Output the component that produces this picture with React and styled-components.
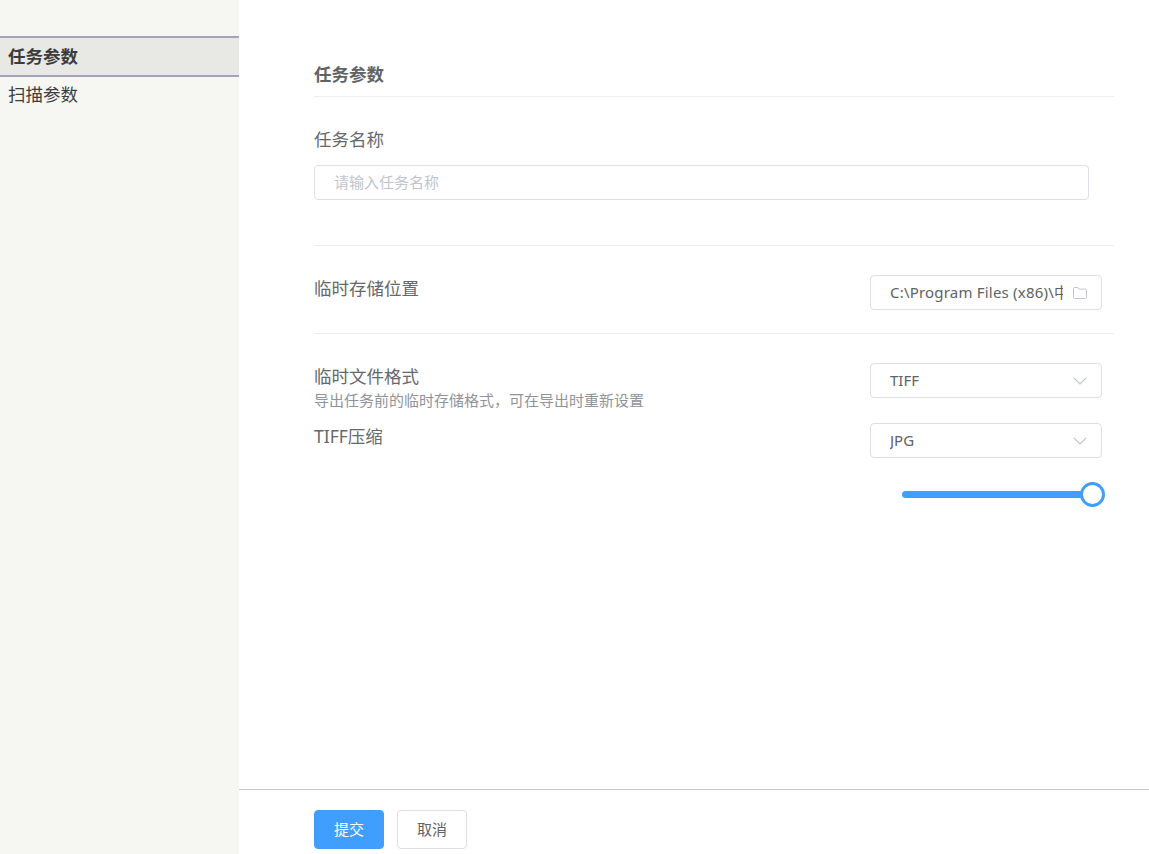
import React from "react";
import styled, { createGlobalStyle } from "styled-components";

const GlobalStyle = createGlobalStyle`
  html, body {
    margin: 0;
    padding: 0;
    background: #fff;
  }
  body {
    font-family: "Noto Sans", "Noto Sans CJK SC", sans-serif;
  }
  * {
    box-sizing: border-box;
  }
`;

const Page = styled.div`
  display: flex;
  width: 1149px;
  height: 854px;
  overflow: hidden;
`;

const Sidebar = styled.nav`
  width: 239px;
  flex-shrink: 0;
  background: #f6f7f3;
  padding-top: 36px;
`;

const NavItem = styled.div`
  height: ${(p) => (p.$active ? "41px" : "37px")};
  line-height: ${(p) => (p.$active ? "37px" : "35px")};
  padding-left: 8px;
  font-size: 17.5px;
  color: #3c3c3c;
  font-weight: ${(p) => (p.$active ? 700 : 400)};
  background: ${(p) => (p.$active ? "#e8e8e4" : "transparent")};
  border-top: ${(p) => (p.$active ? "2px solid #a5a3b9" : "none")};
  border-bottom: ${(p) => (p.$active ? "2px solid #a5a3b9" : "none")};
`;

const Main = styled.main`
  flex: 1;
  display: flex;
  flex-direction: column;
  min-width: 0;
`;

const Content = styled.div`
  flex: 1;
  padding: 54px 35px 0 75px;
`;

const Heading = styled.h2`
  margin: 0;
  height: 43px;
  line-height: 40px;
  font-size: 17.5px;
  font-weight: 700;
  color: #606266;
  border-bottom: 1px solid #ebeef5;
`;

const Section = styled.section`
  padding: ${(p) => p.$padding};
  border-bottom: ${(p) => (p.$last ? "none" : "1px solid #ebeef5")};
`;

const Label = styled.div`
  font-size: 17.5px;
  line-height: 24px;
  color: #66686c;
`;

const NameInput = styled.input`
  display: block;
  width: 775px;
  height: 35px;
  margin-top: 14px;
  padding: 0 19px 2px;
  border: 1px solid #dcdfe6;
  border-radius: 4px;
  outline: none;
  font-family: inherit;
  font-size: 15px;
  color: #606266;

  &::placeholder {
    color: #c0c4cc;
  }
`;

const Row = styled.div`
  display: flex;
  justify-content: space-between;
  align-items: flex-start;
  padding-right: 12px;
  margin-top: ${(p) => p.$gap || "0"};
`;

const LabelBox = styled.div`
  padding-top: 1px;
`;

const Hint = styled.div`
  margin-top: 2px;
  font-size: 15px;
  line-height: 20px;
  color: #909399;
  white-space: nowrap;
`;

const Field = styled.div`
  display: flex;
  align-items: center;
  width: 232px;
  height: 35px;
  padding: 0 14px 0 19px;
  border: 1px solid #dcdfe6;
  border-radius: 4px;
  font-size: 15px;
  color: #606266;
`;

const FieldText = styled.span`
  flex: 1;
  min-width: 0;
  overflow: hidden;
  white-space: nowrap;
  margin-right: 10px;
  padding-bottom: 2px;
  letter-spacing: ${(p) => (p.$wide ? "0.2px" : "normal")};
`;

const SliderWrap = styled.div`
  display: flex;
  justify-content: flex-end;
  padding-right: 21px;
  margin-top: 25px;
`;

const SliderTrack = styled.div`
  position: relative;
  width: 191px;
  height: 7px;
  margin: 8px 0;
  border-radius: 4px;
  background: #409eff;
`;

const SliderThumb = styled.div`
  position: absolute;
  right: -12px;
  top: -9px;
  width: 25px;
  height: 25px;
  border: 3px solid #409eff;
  border-radius: 50%;
  background: #fff;
`;

const Footer = styled.footer`
  display: flex;
  gap: 13px;
  height: 65px;
  padding: 20px 0 0 75px;
  border-top: 1px solid #c8c8c8;
`;

const Button = styled.button`
  width: 70px;
  height: 39px;
  padding: 0 0 3px;
  border-radius: 4px;
  border: 1px solid ${(p) => (p.$primary ? "#409eff" : "#dcdfe6")};
  background: ${(p) => (p.$primary ? "#409eff" : "#fff")};
  color: ${(p) => (p.$primary ? "#fff" : "#606266")};
  font-family: inherit;
  font-size: 15px;
`;

const FolderIcon = () => (
  <svg width="14" height="12" viewBox="0 0 14 12" fill="none" stroke="#c0c4cc" strokeWidth="1">
    <path d="M.5 1.5a1 1 0 0 1 1-1h3.2l1.3 1.6h6.5a1 1 0 0 1 1 1v7.4a1 1 0 0 1-1 1h-11a1 1 0 0 1-1-1z" />
  </svg>
);

const ChevronIcon = () => (
  <svg width="14" height="8" viewBox="0 0 14 8" fill="none" stroke="#c0c4cc" strokeWidth="1.2">
    <path d="M.8.8 7 7l6.2-6.2" />
  </svg>
);

function App() {
  return (
    <Page>
      <GlobalStyle />
      <Sidebar>
        <NavItem $active>任务参数</NavItem>
        <NavItem>扫描参数</NavItem>
      </Sidebar>
      <Main>
        <Content>
          <Heading>任务参数</Heading>
          <Section $padding="30px 0 45px">
            <Label>任务名称</Label>
            <NameInput placeholder="请输入任务名称" />
          </Section>
          <Section $padding="29px 0 23px">
            <Row>
              <LabelBox>
                <Label>临时存储位置</Label>
              </LabelBox>
              <Field>
                <FieldText $wide>C:\Program Files (x86)\中文路径</FieldText>
                <FolderIcon />
              </Field>
            </Row>
          </Section>
          <Section $padding="29px 0 0" $last>
            <Row>
              <LabelBox>
                <Label>临时文件格式</Label>
                <Hint>导出任务前的临时存储格式，可在导出时重新设置</Hint>
              </LabelBox>
              <Field>
                <FieldText>TIFF</FieldText>
                <ChevronIcon />
              </Field>
            </Row>
            <Row $gap="13px">
              <LabelBox>
                <Label>TIFF压缩</Label>
              </LabelBox>
              <Field>
                <FieldText>JPG</FieldText>
                <ChevronIcon />
              </Field>
            </Row>
            <SliderWrap>
              <SliderTrack>
                <SliderThumb />
              </SliderTrack>
            </SliderWrap>
          </Section>
        </Content>
        <Footer>
          <Button $primary>提交</Button>
          <Button>取消</Button>
        </Footer>
      </Main>
    </Page>
  );
}

export default App;
